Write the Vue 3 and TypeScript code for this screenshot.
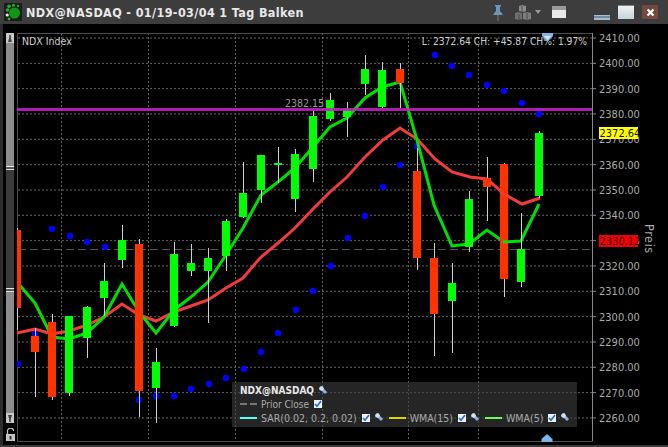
<script setup lang="ts">
type Candle = [x: number, top: number, bottom: number, wickTop: number, wickBottom: number, up: boolean];

const candles: Candle[] = [
  [17, 230, 308, 228, 330, false],
  [35, 336, 352, 328, 397, false],
  [52, 322, 397, 314, 400, false],
  [69, 316, 393, 316, 396, true],
  [87, 307, 338, 306, 358, true],
  [104, 281, 298, 263, 316, true],
  [122, 240, 260, 225, 268, true],
  [139, 244, 391, 239, 417, false],
  [156, 362, 388, 348, 423, true],
  [174, 254, 326, 242, 327, true],
  [191, 263, 271, 244, 276, true],
  [208, 258, 271, 248, 323, true],
  [226, 221, 256, 219, 271, true],
  [243, 193, 217, 162, 218, true],
  [261, 155, 190, 155, 203, true],
  [278, 163, 165, 147, 183, true],
  [295, 154, 199, 149, 212, true],
  [313, 116, 169, 111, 182, true],
  [330, 100, 119, 93, 121, true],
  [347, 109, 117, 102, 137, true],
  [365, 69, 84, 55, 95, true],
  [382, 70, 107, 62, 108, true],
  [400, 69, 83, 63, 108, false],
  [417, 171, 258, 148, 270, false],
  [434, 258, 314, 243, 356, false],
  [452, 283, 301, 263, 353, true],
  [469, 199, 247, 191, 252, true],
  [487, 178, 187, 157, 221, false],
  [504, 164, 279, 163, 297, false],
  [521, 249, 282, 213, 287, true],
  [539, 133, 196, 131, 198, true],
];

const dots = [
  [18, 364], [35, 334], [52, 229], [70, 236], [87, 242], [105, 247], [139, 400], [156, 396], [174, 396],
  [191, 389], [209, 384], [226, 378], [244, 369], [261, 352], [278, 333], [296, 310], [313, 291], [331, 266],
  [348, 238], [365, 216], [383, 187], [400, 165], [417, 146], [435, 55], [452, 66], [469, 75], [487, 85],
  [504, 91], [522, 103], [539, 114],
];

const slowLine =
  '17,333 35,329 52,334 69,331 87,325 104,317 122,304 139,315 156,321 174,312 191,306 208,300 226,288 243,278 260,258 278,243 295,228 313,209 330,192 347,177 365,157 383,140 400,128 417,139 435,159 452,172 470,177 487,179 504,194 522,204 540,198';
const fastLine =
  '17,282 35,303 52,337 69,339 87,333 104,317 122,284 139,312 156,333 174,310 191,297 208,282 226,255 243,228 261,195 278,182 295,168 313,147 330,127 347,118 365,98 382,87 400,82 417,140 434,205 452,246 469,244 487,230 504,242 521,241 539,204';

const priceLabels = Array.from({ length: 16 }, (_, i) => ({
  text: `${2410 - i * 10}.00`,
  y: 38 + i * 25.33,
}));
const gridX = [61, 148, 235, 322, 408, 478];

const indicators = [
  { label: 'SAR(0.02, 0.2, 0.02)', color: '#55ffff' },
  { label: 'WMA(15)', color: '#d8d800' },
  { label: 'WMA(5)', color: '#66ff55' },
];
</script>

<template>
  <div class="window">
    <header class="titlebar">
      <svg class="logo" width="18" height="18" viewBox="0 0 18 18">
        <rect width="18" height="18" fill="#1c1c1c" />
        <circle cx="10.5" cy="10" r="5.5" fill="#0f9a12" />
        <circle cx="3.5" cy="7" r="1.8" fill="#22b522" />
        <circle cx="5" cy="3.2" r="1.8" fill="#22b522" />
        <circle cx="9.5" cy="2.2" r="1.5" fill="#22b522" />
        <circle cx="14" cy="3" r="1.2" fill="#22b522" />
        <circle cx="3.2" cy="12" r="1.6" fill="#e8e8e8" />
        <circle cx="5" cy="16" r="1.4" fill="#22b522" />
      </svg>
      <h1 class="title">NDX@NASDAQ - 01/19-03/04 1 Tag Balken</h1>
      <div class="tools">
        <svg class="pin" width="10" height="16" viewBox="0 0 10 16">
          <path d="M2 0h6v1.5H7V6l2.5 3v1h-9V9L3 6V1.5H2z" fill="#6f97b5" />
          <rect x="4.5" y="10" width="1" height="6" fill="#7a7a7a" />
        </svg>
        <svg class="cubes" width="16" height="16" viewBox="0 0 16 16">
          <path d="M4 1l3-1 4 1v5l-3 1-4-1z" fill="#8b8b8b" />
          <path d="M0 8l3-1 4 1v6l-3 1-4-1z" fill="#6f6f6f" />
          <path d="M8 8l4-1 4 1v6l-4 1-4-1z" fill="#7d7d7d" />
          <path d="M4 9v6M12 8v7M7 1v6" stroke="#4a4a4a" fill="none" />
        </svg>
        <span class="caret"></span>
        <span class="panel-icon"></span>
        <span class="minimize"></span>
        <span class="maximize"></span>
        <span class="close">
          <svg width="9" height="9" viewBox="0 0 9 9">
            <path d="M1.5 1.5l6 6M7.5 1.5l-6 6" stroke="#fff" stroke-width="2.2" />
          </svg>
        </span>
      </div>
    </header>

    <div class="body">
      <aside class="rail">
        <div class="rail-track">
          <span class="rail-btn"><i class="rail-glyph"></i></span>
          <span class="rail-gray rail-gray--top"></span>
          <span class="rail-handle"></span>
          <span class="rail-dark"></span>
          <span class="rail-handle"></span>
          <span class="rail-gray rail-gray--bottom"></span>
          <span class="rail-btn rail-btn--low"><i class="rail-glyph rail-glyph--down"></i></span>
        </div>
        <svg class="lock" width="9" height="13" viewBox="0 0 9 13">
          <path d="M1.5 6V3a3 3 0 0 1 6 0" stroke="#c4c4c4" stroke-width="1.3" fill="none" />
          <rect y="6" width="9" height="7" fill="#c4c4c4" />
          <rect x="3.5" y="8" width="2" height="3.5" fill="#333" />
        </svg>
      </aside>

      <div class="chart">
        <svg class="plot" width="651" height="421" viewBox="17 24 651 421">
          <defs>
            <clipPath id="plot-area">
              <rect x="17" y="33" width="575" height="408" />
            </clipPath>
          </defs>

          <g class="grid">
            <line v-for="p in priceLabels" :key="p.text" x1="18" x2="592" :y1="p.y" :y2="p.y" />
            <line v-for="x in gridX" :key="x" :x1="x + 0.5" :x2="x + 0.5" y1="33" y2="441" />
          </g>
          <line class="prior" x1="18" x2="592" y1="249.5" y2="249.5" />
          <path class="frame" d="M592.5 33.5H17.5V441.5H592.5" />
          <line class="axis" x1="592.5" x2="592.5" y1="33" y2="441" />
          <line v-for="p in priceLabels" :key="`tick-${p.text}`" class="axis" x1="592" x2="596" :y1="p.y" :y2="p.y" />

          <g clip-path="url(#plot-area)">
            <circle v-for="d in dots" :key="d[0]" class="dot" :cx="d[0]" :cy="d[1]" r="3.2" />
            <polyline class="line line--slow" :points="slowLine" />
            <polyline class="line line--fast" :points="fastLine" />
            <g v-for="c in candles" :key="c[0]">
              <line class="wick" :x1="c[0] + 0.5" :x2="c[0] + 0.5" :y1="c[3]" :y2="c[4]" />
              <rect
                :class="c[5] ? 'bull' : 'bear'"
                :x="c[0] - 4"
                :y="c[1]"
                width="8"
                :height="c[2] - c[1]"
              />
            </g>
            <path class="line line--fast" d="M503 241.8H508" />
            <path class="line line--slow" d="M500 192L508 196.3" />
            <rect class="level" x="17" y="108" width="575" height="3" />
          </g>

          <text class="info" x="22" y="45">NDX Index</text>
          <text class="info info--quote" x="587" y="45" text-anchor="end">L: 2372.64 CH: +45.87 CH%: 1.97%</text>
          <text class="level-label" x="285" y="107">2382.15</text>

          <path class="marker" d="M542 33h11v3l-5.5 6-5.5-6z" />
          <path class="marker-fill" d="M544 36h7l-3.5 4z" />
          <path class="marker" d="M541.5 442v-3l5.5-5 5.5 5v3z" />

          <text v-for="p in priceLabels" :key="`label-${p.text}`" class="price" x="599" :y="p.y + 4">{{ p.text }}</text>
          <rect class="tag tag--last" x="599" y="127" width="39" height="12" />
          <text class="tag-text" x="599.5" y="137">2372.64</text>
          <rect class="tag tag--close" x="599" y="235" width="39" height="12" />
          <text class="tag-text tag-text--close" x="599.5" y="245">2330.12</text>
          <text class="price price--axis" transform="translate(645 224) rotate(90)">Preis</text>
        </svg>

        <section class="legend">
          <div class="legend-row">
            <strong class="legend-name">NDX@NASDAQ</strong>
            <svg class="wrench" viewBox="0 0 9 9"><path d="M2.5 2.5L7 7" /><path class="wrench-head" d="M0 2l2-2 2 .5L5 3 3 5 .5 4z" /></svg>
          </div>
          <div class="legend-row">
            <span class="swatch swatch--dash"><i></i><i></i></span>
            <span class="legend-text legend-text--prior">Prior Close</span>
            <span class="check check--tight"><svg viewBox="0 0 8 8"><path d="M1 4l2 2.3L7 1" /></svg></span>
          </div>
          <div class="legend-row">
            <template v-for="item in indicators" :key="item.label">
              <span class="swatch" :style="{ background: item.color }"></span>
              <span class="legend-text">{{ item.label }}</span>
              <span class="check"><svg viewBox="0 0 8 8"><path d="M1 4l2 2.3L7 1" /></svg></span>
              <svg class="wrench" viewBox="0 0 9 9"><path d="M2.5 2.5L7 7" /><path class="wrench-head" d="M0 2l2-2 2 .5L5 3 3 5 .5 4z" /></svg>
            </template>
          </div>
        </section>
      </div>
    </div>
    <footer class="statusline"></footer>
  </div>
</template>

<style>
body {
  margin: 0;
  background: #000;
}
</style>

<style scoped>
.window {
  width: 668px;
  height: 447px;
  overflow: hidden;
  display: flex;
  flex-direction: column;
  background: #000;
  font-family: 'DejaVu Sans Condensed', 'DejaVu Sans', sans-serif;
}

.titlebar {
  height: 24px;
  flex: none;
  display: flex;
  align-items: center;
  padding-left: 4px;
  background: #3d3d3d;
}

.logo {
  flex: none;
}

.title {
  margin: 0 0 0 4px;
  font: 700 12.5px 'DejaVu Sans Condensed', 'DejaVu Sans', sans-serif;
  letter-spacing: 0.36px;
  color: #e8e8e8;
  white-space: nowrap;
}

.tools {
  margin-left: auto;
  display: flex;
  align-items: center;
  padding-right: 10px;
}

.pin {
  margin-top: 2px;
}

.cubes {
  margin-left: 12px;
  margin-top: 2px;
}

.caret {
  margin-left: 4px;
  width: 0;
  height: 0;
  border: 3px solid transparent;
  border-top: 4px solid #999;
  border-bottom: 0;
}

.panel-icon {
  margin-left: 11px;
  width: 14px;
  height: 12px;
  background: linear-gradient(#9a9a9a 0 4px, #e8e8e8 4px);
}

.minimize {
  margin-left: 28px;
  margin-top: 10px;
  width: 16px;
  height: 5px;
  background: linear-gradient(#aac0d0 0 1px, #6d8aa0 1px 3px, #a9bdcc 3px);
}

.maximize {
  margin-left: 8px;
  width: 16px;
  height: 14px;
  background: linear-gradient(#6d8aa0 0 1px, #eef2f5 1px, #c6d2da);
}

.close {
  margin-left: 8px;
  width: 16px;
  height: 14px;
  display: flex;
  align-items: center;
  justify-content: center;
  background: #74483c;
}

.body {
  flex: 1;
  display: flex;
  min-height: 0;
}

.statusline {
  height: 2px;
  flex: none;
  background: #3a3a3a;
}

.rail {
  width: 17px;
  flex: none;
  box-sizing: border-box;
  border-left: 3px solid #2c2c2c;
  padding: 9px 0 0 3px;
  display: flex;
  flex-direction: column;
  background: #000;
}

.rail-track {
  width: 8px;
  display: flex;
  flex-direction: column;
}

.rail-btn {
  height: 10px;
  display: block;
  background: #c8c8c8;
  position: relative;
}

.rail-glyph {
  position: absolute;
  left: 2px;
  top: 2px;
  width: 4px;
  height: 7px;
  background: #444;
  clip-path: polygon(30% 0, 70% 0, 70% 40%, 100% 100%, 0 100%, 30% 40%);
}

.rail-glyph--down {
  transform: rotate(180deg);
}

.rail-gray {
  display: block;
  background: #8c8c8c;
}

.rail-gray--top {
  height: 123px;
}

.rail-gray--bottom {
  height: 121px;
}

.rail-dark {
  height: 118px;
  background: #3a3a3a;
}

.rail-handle {
  height: 4px;
  box-sizing: border-box;
  border-top: 1px solid #eee;
  border-bottom: 1px solid #ddd;
  background: #555;
}

.lock {
  margin-top: 5px;
}

.chart {
  position: relative;
  flex: 1;
  min-width: 0;
}

.plot {
  display: block;
}

.grid line {
  stroke: #666;
  stroke-width: 1;
  stroke-dasharray: 2 2;
}

.prior {
  stroke: #555;
  stroke-dasharray: 8 4;
}

.frame {
  fill: none;
  stroke: #4d4d4d;
}

.axis {
  stroke: #8a8a8a;
}

.dot {
  fill: #0000ff;
}

.line {
  fill: none;
  stroke-width: 3;
  stroke-linejoin: miter;
}

.line--slow {
  stroke: #f23c3c;
}

.line--fast {
  stroke: #00e000;
}

.wick {
  stroke: #cfcfcf;
  stroke-width: 1;
}

.bull {
  fill: #00ff00;
}

.bear {
  fill: #ff3300;
}

.level {
  fill: #c81fc8;
  opacity: 0.88;
}

.info {
  font-size: 10.5px;
  fill: #cfcfcf;
}

.info--quote {
  font-size: 10.2px;
}

.level-label {
  font-size: 10.5px;
  fill: #999;
}

.price {
  font-size: 11px;
  fill: #aaa;
}

.price--axis {
  font-size: 12.5px;
  letter-spacing: 0.6px;
}

.marker {
  fill: #7db4ec;
}

.marker-fill {
  fill: #d8e8f6;
}

.tag--last {
  fill: #ffff00;
}

.tag--close {
  fill: #f00000;
}

.tag-text {
  font-size: 11px;
  fill: #111;
}

.tag-text--close {
  fill: #3a0000;
}

.legend {
  position: absolute;
  left: 215px;
  top: 358px;
  width: 345px;
  height: 45px;
  box-sizing: border-box;
  padding: 2px 0 0 8px;
  display: flex;
  flex-direction: column;
  background: rgb(60 60 60 / 62%);
  font-size: 10.5px;
  color: #aaa;
}

.legend-row {
  height: 13.5px;
  display: flex;
  align-items: center;
  white-space: nowrap;
}

.legend-name {
  color: #e8e8e8;
  font-size: 10px;
}

.legend-text--prior {
  font-size: 10px;
}

.wrench {
  width: 9px;
  height: 9px;
  margin-left: 5px;
  flex: none;
  fill: none;
  stroke: #86b4e4;
  stroke-width: 3;
}

.wrench-head {
  fill: #cfe0f2;
  stroke: none;
}

.swatch {
  width: 17px;
  height: 2px;
  margin-right: 4px;
  flex: none;
}

.swatch--dash {
  display: flex;
  gap: 3px;
}

.swatch--dash i {
  width: 7px;
  height: 2px;
  background: #777;
}

.legend-row .swatch:not(:first-child) {
  margin-left: 5px;
}

.check {
  width: 8px;
  height: 8px;
  margin-left: 5px;
  flex: none;
  background: #eef3fa;
}

.check--tight {
  margin-left: 5px;
}

.check svg {
  display: block;
  fill: none;
  stroke: #1f6fd8;
  stroke-width: 1.6;
}
</style>
